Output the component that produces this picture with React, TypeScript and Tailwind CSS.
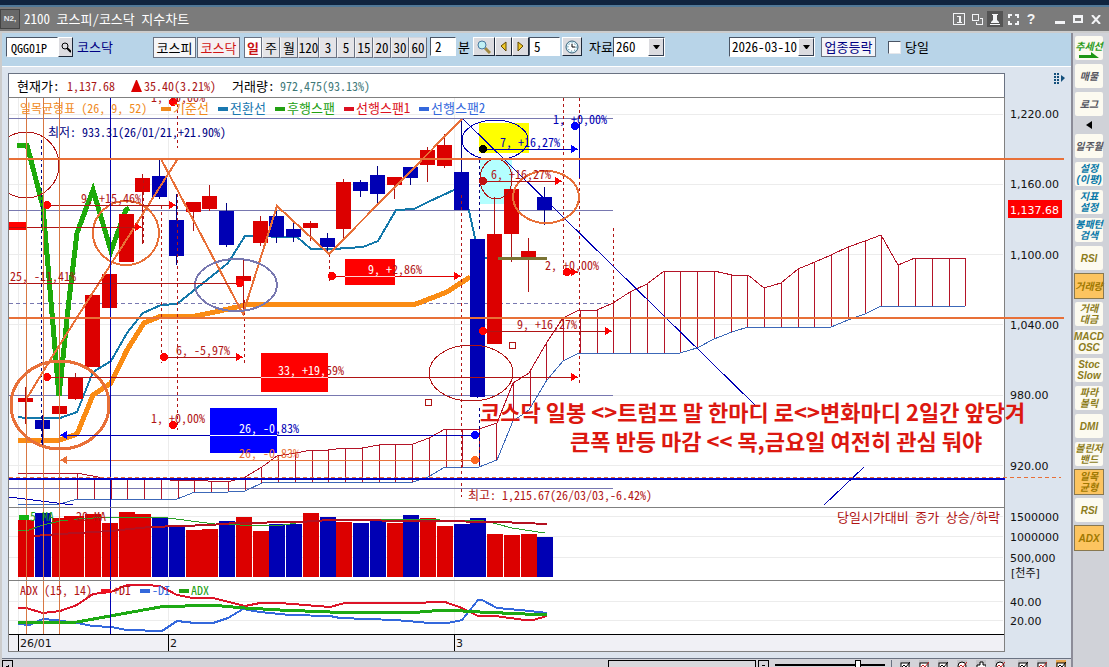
import React, { useState } from "react";

type Point = [number, number];

interface Candle {
  up: boolean;
  top: number;
  bottom: number;
  high: number;
  low: number;
}

interface MeasureProps {
  y: number;
  dot?: number;
  from: number;
  to: number;
  color: string;
  dotColor?: string;
  arrowColor?: string;
  reverse?: boolean;
}

interface SideItem {
  lines: string[];
  tone: string;
  active?: boolean;
}

const RED = "#dc0000";
const BLUE = "#0000b4";
const ORANGE = "#e87038";
const DARK_RED = "#b01414";
const NAVY = "#000082";

const STEP = 16.75;

const candles: Candle[] = [
  { up: true, top: 398, bottom: 402, high: 387, low: 424 },
  { up: false, top: 420, bottom: 429, high: 415, low: 448 },
  { up: true, top: 406, bottom: 414, high: 403, low: 421 },
  { up: true, top: 378, bottom: 399, high: 373, low: 400 },
  { up: true, top: 295, bottom: 367, high: 295, low: 367 },
  { up: true, top: 274, bottom: 308, high: 274, low: 308 },
  { up: true, top: 214, bottom: 262, high: 214, low: 262 },
  { up: true, top: 178, bottom: 192, high: 174, low: 244 },
  { up: false, top: 176, bottom: 197, high: 160, low: 199 },
  { up: false, top: 220, bottom: 256, high: 194, low: 265 },
  { up: true, top: 202, bottom: 212, high: 202, low: 231 },
  { up: true, top: 196, bottom: 209, high: 185, low: 211 },
  { up: false, top: 211, bottom: 245, high: 203, low: 247 },
  { up: true, top: 276, bottom: 281, high: 260, low: 310 },
  { up: true, top: 221, bottom: 243, high: 216, low: 246 },
  { up: false, top: 216, bottom: 237, high: 211, low: 243 },
  { up: false, top: 229, bottom: 237, high: 223, low: 242 },
  { up: true, top: 223, bottom: 228, high: 221, low: 241 },
  { up: false, top: 238, bottom: 247, high: 233, low: 251 },
  { up: true, top: 182, bottom: 229, high: 179, low: 238 },
  { up: false, top: 182, bottom: 191, high: 180, low: 197 },
  { up: false, top: 175, bottom: 194, high: 166, low: 203 },
  { up: true, top: 177, bottom: 185, high: 177, low: 199 },
  { up: false, top: 167, bottom: 178, high: 167, low: 185 },
  { up: true, top: 150, bottom: 165, high: 147, low: 182 },
  { up: true, top: 145, bottom: 166, high: 134, low: 168 },
  { up: false, top: 172, bottom: 210, high: 119, low: 210 },
  { up: false, top: 239, bottom: 397, high: 239, low: 398 },
  { up: true, top: 234, bottom: 344, high: 197, low: 344 },
  { up: true, top: 189, bottom: 234, high: 189, low: 262 },
  { up: true, top: 251, bottom: 259, high: 238, low: 292 },
  { up: false, top: 197, bottom: 210, high: 187, low: 225 },
];

const volumes: [number, boolean][] = [
  [520, true], [513, false], [518, true], [516, true], [514, true], [523, true], [512, true], [514, true],
  [517, false], [527, false], [530, true], [529, true], [521, false], [517, true], [531, true], [524, false],
  [524, false], [513, true], [517, false], [522, true], [523, false], [519, false], [523, true], [515, false],
  [518, true], [526, true], [524, false], [518, false], [534, true], [535, true], [534, true], [537, false],
];

const lagging: Point[] = [[17, 145], [27, 145], [43, 207], [59, 396], [69, 300], [77, 233], [93, 190], [111, 251], [126, 210], [129, 208]];

const conversion: Point[] = [
  [18, 417], [26, 418], [60, 418], [77, 412], [93, 372], [111, 361], [127, 333], [143, 313], [161, 305], [177, 304],
  [228, 263], [245, 236], [297, 237], [311, 249], [333, 249], [363, 247], [378, 241], [396, 210], [414, 209],
  [428, 202], [454, 190], [463, 189], [469, 211], [477, 247], [485, 258], [547, 258],
];

const base: Point[] = [
  [18, 440], [60, 440], [77, 434], [93, 395], [111, 383], [127, 350], [144, 323], [161, 316], [195, 316],
  [215, 312], [250, 304], [416, 304], [447, 292], [470, 277],
];

const spanA: Point[] = [
  [18, 473], [77, 473], [103, 478], [169, 480], [208, 481], [228, 482], [245, 477], [262, 467], [277, 456],
  [295, 453], [312, 450], [328, 450], [345, 448], [362, 448], [379, 445], [395, 444], [413, 444], [429, 438],
  [445, 429], [479, 429], [497, 423], [513, 383], [529, 373], [547, 342], [563, 318], [579, 310], [597, 310],
  [613, 303], [630, 292], [647, 284], [664, 271], [714, 271], [732, 275], [748, 275], [764, 288], [781, 283],
  [798, 269], [815, 262], [831, 255], [848, 247], [865, 241], [881, 235], [898, 265], [915, 258], [965, 258],
];

const spanB: Point[] = [
  [18, 504], [60, 504], [77, 499], [177, 499], [195, 492], [228, 492], [245, 491], [262, 483], [277, 482],
  [413, 482], [428, 477], [445, 467], [479, 467], [497, 460], [513, 421], [529, 410], [547, 380], [563, 361],
  [579, 353], [680, 353], [697, 348], [714, 339], [732, 332], [748, 327], [831, 327], [848, 320], [865, 314],
  [881, 306], [965, 306],
];

const zigzag: Point[] = [[161, 159], [243, 314], [277, 206], [329, 254], [462, 119]];

const volShort: Point[] = [
  [18, 531], [29, 530], [43, 525], [60, 521], [77, 519], [110, 517], [160, 517], [215, 524], [240, 525],
  [283, 525], [303, 522], [330, 520], [370, 519], [430, 519], [450, 521], [480, 520], [497, 524], [512, 528], [545, 533],
];
const volLong: Point[] = [
  [34, 536], [60, 534], [110, 531], [150, 527], [210, 525], [235, 523], [300, 522], [330, 520], [430, 521], [500, 522], [547, 524],
];

const plusDI: Point[] = [
  [18, 608], [26, 608], [43, 613], [60, 611], [77, 605], [93, 594], [111, 592], [127, 585], [145, 585], [160, 586],
  [177, 595], [193, 598], [213, 598], [245, 606], [260, 603], [280, 603], [330, 607], [345, 603], [420, 603],
  [432, 602], [445, 602], [462, 608], [478, 616], [495, 616], [525, 620], [533, 620], [547, 616],
];
const minusDI: Point[] = [
  [18, 624], [30, 625], [43, 619], [55, 620], [77, 623], [93, 626], [111, 627], [127, 630], [162, 631], [177, 621],
  [195, 623], [213, 623], [228, 618], [243, 609], [260, 612], [290, 615], [330, 616], [340, 618], [395, 620],
  [430, 623], [448, 623], [462, 620], [478, 600], [482, 600], [497, 608], [530, 611], [547, 613],
];
const adx: Point[] = [
  [18, 623], [77, 622], [110, 616], [160, 607], [210, 605], [245, 608], [280, 610], [330, 612], [420, 612],
  [445, 610], [480, 612], [547, 615],
];

const legend = [
  { x: 161, label: "기준선", color: "#f08a1c" },
  { x: 218, label: "전환선", color: "#1a78b0" },
  { x: 275, label: "후행스팬", color: "#22a012" },
  { x: 344, label: "선행스팬1", color: "#dc1020" },
  { x: 419, label: "선행스팬2", color: "#3468dc" },
];

const priceLabels: [string, number][] = [
  ["1,220.00", 118], ["1,160.00", 188], ["1,100.00", 259], ["1,040.00", 329], ["980.00", 399], ["920.00", 470],
  ["1500000", 521], ["1000000", 541], ["500,000", 562], ["40.00", 606], ["20.00", 625],
];

// dashed verticals: x, from, to, colour
const dashes: [number, number, number, string][] = [
  [41, 140, 445, NAVY],
  [177, 98, 148, DARK_RED],
  [177, 194, 430, DARK_RED],
  [161, 206, 363, DARK_RED],
  [143, 180, 244, DARK_RED],
  [244, 300, 363, DARK_RED],
  [329, 254, 282, DARK_RED],
  [461, 195, 497, DARK_RED],
  [479, 160, 229, NAVY],
  [479, 408, 466, NAVY],
  [563, 98, 278, DARK_RED],
  [579, 98, 383, DARK_RED],
  [613, 228, 330, DARK_RED],
];

const sideTop: SideItem[] = [
  { lines: ["매물"], tone: "text-[#55555f]" },
  { lines: ["로그"], tone: "text-[#55555f]" },
];

const sideRest: SideItem[] = [
  { lines: ["일주월"], tone: "text-[#55555f]" },
  { lines: ["설정", "(이평)"], tone: "text-[#0878a8]" },
  { lines: ["지표", "설정"], tone: "text-[#0878a8]" },
  { lines: ["봉패턴", "검색"], tone: "text-[#0878a8]" },
  { lines: ["RSI"], tone: "text-[#8c7c1c]" },
  { lines: ["거래량"], tone: "text-[#a07800]", active: true },
  { lines: ["거래", "대금"], tone: "text-[#8c7c1c]" },
  { lines: ["MACD", "OSC"], tone: "text-[#8c7c1c]" },
  { lines: ["Stoc", "Slow"], tone: "text-[#8c7c1c]" },
  { lines: ["파라", "볼릭"], tone: "text-[#8c7c1c]" },
  { lines: ["DMI"], tone: "text-[#8c7c1c]" },
  { lines: ["볼린저", "밴드"], tone: "text-[#8c7c1c]" },
  { lines: ["일목", "균형"], tone: "text-[#a07800]", active: true },
  { lines: ["RSI"], tone: "text-[#8c7c1c]" },
  { lines: ["ADX"], tone: "text-[#a07800]", active: true },
];

const periods = ["일", "주", "월", "120", "3", "5", "15", "20", "30", "60"];

const toPoints = (list: Point[]) => list.map((p) => p.join(",")).join(" ");

const valueAt = (list: Point[], x: number) => {
  for (let i = 1; i < list.length; i++) {
    const [x0, y0] = list[i - 1];
    const [x1, y1] = list[i];
    if (x <= x1) return y0 + ((y1 - y0) * (x - x0)) / (x1 - x0);
  }
  return list[list.length - 1][1];
};

const cloudBars = Array.from({ length: 54 }, (_, i) => Math.round(77 + i * 16.76)).filter((x) => x <= 966);

const Measure: React.FC<MeasureProps> = ({ y, dot, from, to, color, dotColor, arrowColor, reverse }) => (
  <g>
    <line x1={from} x2={to} y1={y} y2={y} stroke={color} />
    {dot !== undefined && <circle cx={dot} cy={y} r="4" fill={dotColor ?? "#f00"} />}
    {reverse ? (
      <polygon points={`${from},${y} ${from + 7},${y - 4} ${from + 7},${y + 4}`} fill={arrowColor ?? color} />
    ) : (
      <polygon points={`${to},${y} ${to - 7},${y - 4} ${to - 7},${y + 4}`} fill={arrowColor ?? "#f00"} />
    )}
  </g>
);

const Chart: React.FC = () => (
  <svg
    viewBox="8 97 1057 555"
    className="block w-full font-['Noto_Sans_Mono_CJK_KR','Noto_Sans_CJK_KR',sans-serif] text-[12px]"
    shapeRendering="crispEdges"
    role="img"
    aria-label="코스닥 지수차트"
  >
    <defs>
      <clipPath id="plot">
        <rect x="9" y="98" width="996" height="537" />
      </clipPath>
    </defs>
    <rect x="8" y="97" width="997" height="555" fill="#808080" />
    <rect x="9" y="98" width="995" height="536" fill="#fff" />
    <rect x="9" y="635" width="995" height="16" fill="#f0f0f5" />

    {/* grid */}
    <g fill="#ececec">
      {[114, 184, 254, 324, 395, 465, 516, 536, 557, 601, 620].map((y) => (
        <rect key={y} x="9" y={y} width="994" height="1" />
      ))}
      {[18, 168, 454].map((x) => (
        <rect key={x} x={x} y="98" width="1" height="536" />
      ))}
    </g>
    <g fill="#7878b0">
      {[118, 210, 395, 488].map((y) => (
        <rect key={y} x="9" y={y} width="604" height="1" />
      ))}
    </g>
    <line x1="9" x2="613" y1="303" y2="303" stroke="#7878b0" strokeDasharray="4 3" />

    <g clipPath="url(#plot)" fill="none">
      {/* cloud */}
      {cloudBars.map((x) => (
        <line key={x} x1={x} x2={x} y1={valueAt(spanA, x)} y2={valueAt(spanB, x)} stroke="#b41428" />
      ))}
      <polyline points={toPoints(spanA)} stroke="#b41428" />
      <polyline points={toPoints(spanB)} stroke="#3c68b8" />

      {/* highlight boxes */}
      <rect x="479" y="123" width="50" height="30" fill="#ff0" />
      <rect x="480" y="160" width="32" height="44" fill="#b4ffff" />
      <rect x="345" y="259" width="50" height="26" fill="#f00" />
      <rect x="261" y="353" width="67" height="39" fill="#f00" />
      <rect x="210" y="408" width="67" height="45" fill="#00f" />
      <rect x="9" y="222" width="17" height="8" fill="#f00" />

      <polyline points={toPoints(lagging)} stroke="#1eaa0a" strokeWidth="5" />
      <polyline points={toPoints(base)} stroke="#fa8c14" strokeWidth="5" />
      <polyline points={toPoints(conversion)} stroke="#1478aa" strokeWidth="2" />

      {/* candles */}
      {candles.map((c, i) => {
        const x = Math.round(18 + i * STEP);
        return (
          <g key={i} fill={c.up ? RED : BLUE}>
            <rect x={x + 7} y={c.high} width="1" height={c.low - c.high} fill={c.up ? DARK_RED : NAVY} />
            <rect x={x} y={c.top} width="15" height={c.bottom - c.top} />
          </g>
        );
      })}
      <line x1="498" x2="547" y1="258" y2="258" stroke="#7a7434" strokeWidth="3" />

      {dashes.map(([x, y1, y2, color]) => (
        <line key={`${x}-${y1}`} x1={x} x2={x} y1={y1} y2={y2} stroke={color} strokeDasharray="3 3" />
      ))}
      <line x1="579" x2="579" y1="124" y2="178" stroke={BLUE} />

      {/* drawn trend lines */}
      <polyline points="27,398 52,357 177,160" stroke={ORANGE} strokeWidth="2" />
      <polyline points={toPoints(zigzag)} stroke={ORANGE} strokeWidth="2" />
      <polyline points="463,119 757,407" stroke={BLUE} />
      <polyline points="864,467 824,505" stroke={BLUE} />
      <polyline points="9,497 73,505" stroke={BLUE} />

      {/* circles */}
      <ellipse cx="26" cy="165" rx="33" ry="33" stroke={DARK_RED} />
      <ellipse cx="126" cy="233" rx="33" ry="32" stroke={ORANGE} strokeWidth="2" />
      <ellipse cx="60" cy="405" rx="49" ry="44" stroke={ORANGE} strokeWidth="3" />
      <ellipse cx="236" cy="285" rx="41" ry="26" stroke="#7878b0" strokeWidth="2" />
      <ellipse cx="495" cy="140" rx="33" ry="20" stroke={BLUE} />
      <ellipse cx="496" cy="179" rx="16" ry="20" stroke={DARK_RED} />
      <ellipse cx="546" cy="197" rx="33" ry="26" stroke={ORANGE} strokeWidth="2" />
      <ellipse cx="471" cy="373" rx="42" ry="28" stroke={DARK_RED} />
      <rect x="509" y="342" width="6" height="6" stroke={DARK_RED} />
      <rect x="425" y="399" width="6" height="6" stroke={DARK_RED} />

      {/* period measures */}
      <Measure y={205} dot={47} from={47} to={176} color={DARK_RED} />
      <Measure y={227} from={9} to={142} color={DARK_RED} />
      <Measure y={283} dot={240} from={9} to={244} color={DARK_RED} />
      <Measure y={357} dot={164} from={164} to={243} color={DARK_RED} />
      <Measure y={377} dot={47} from={47} to={578} color={DARK_RED} />
      <line x1="261" x2="328" y1="377" y2="377" stroke="#ffd0d0" />
      <Measure y={435} dot={475} dotColor="#00f" from={60} to={475} color={BLUE} arrowColor="#00f" reverse />
      <line x1="210" x2="277" y1="435" y2="435" stroke="#fff" />
      <Measure y={460} dot={475} dotColor="#ff6820" from={60} to={475} color={ORANGE} reverse />
      <Measure y={276} dot={332} from={332} to={461} color="#e00000" />
      <line x1="345" x2="395" y1="276" y2="276" stroke="#ffd0d0" />
      <Measure y={149} dot={483} dotColor="#000" from={483} to={578} color={BLUE} arrowColor="#00f" />
      <Measure y={181} dot={483} dotColor="#c01010" from={483} to={562} color={DARK_RED} />
      <Measure y={331} dot={483} from={483} to={612} color={DARK_RED} />
      <Measure y={272} dot={567} from={567} to={578} color={DARK_RED} />
      <circle cx="173" cy="102" r="4" fill="#f00" />
      <circle cx="173" cy="425" r="4" fill="#f00" />
      <circle cx="575" cy="126" r="4" fill="#00f" />

      {/* volume */}
      {volumes.map(([top, up], i) => (
        <rect key={i} x={Math.round(18 + i * STEP)} y={top} width="16" height={577 - top} fill={up ? RED : BLUE} />
      ))}
      <polyline points={toPoints(volShort)} stroke="#2ca028" />
      <polyline points={toPoints(volLong)} stroke="#b41020" strokeWidth="2" />

      {/* ADX */}
      <polyline points={toPoints(plusDI)} stroke="#dc1428" strokeWidth="2" />
      <polyline points={toPoints(minusDI)} stroke="#3468dc" strokeWidth="2" />
      <polyline points={toPoints(adx)} stroke="#1eaa14" strokeWidth="3" />

      {[27, 44, 60].map((x) => (
        <rect key={x} x={x - 1} y="98" width="1" height="536" fill="#d87844" />
      ))}
      <rect x="110" y="98" width="1" height="536" fill={BLUE} />
    </g>

    {/* levels and panel borders */}
    <rect x="9" y="158" width="1055" height="2" fill={ORANGE} />
    <rect x="9" y="317" width="1055" height="2" fill={ORANGE} />
    <line x1="9" x2="1061" y1="477" y2="477" stroke={ORANGE} strokeDasharray="4 3" />
    <rect x="9" y="478" width="996" height="2" fill="#0000c8" />
    <rect x="9" y="507" width="995" height="1" fill="#808080" />
    <rect x="9" y="580" width="995" height="1" fill="#808080" />
    <rect x="9" y="634" width="995" height="1" fill="#000" />
    {[18, 168, 454].map((x) => (
      <rect key={x} x={x} y="635" width="1" height="16" fill="#000" />
    ))}

    {/* legends */}
    <text x="20" y="113" fill="#f08a1c">일목균형표 (26, 9, 52)</text>
    {legend.map((l) => (
      <g key={l.label} fill={l.color}>
        <rect x={l.x} y="107" width="10" height="4" />
        <text x={l.x + 12} y="113" className="text-[13px]">{l.label}</text>
      </g>
    ))}
    <rect x="19" y="515" width="10" height="5" fill="#14b414" />
    <text x="30" y="521" fill="#14a014">5 MA</text>
    <rect x="64" y="516" width="10" height="4" fill="#dc0000" />
    <text x="76" y="521" fill={DARK_RED}>20 MA</text>
    <text x="20" y="595" fill={DARK_RED}>ADX (15, 14)</text>
    <rect x="101" y="589" width="10" height="4" fill="#f01020" />
    <text x="113" y="595" fill={DARK_RED}>+DI</text>
    <rect x="140" y="589" width="10" height="4" fill="#3468dc" />
    <text x="152" y="595" fill="#3468dc">-DI</text>
    <rect x="179" y="589" width="10" height="4" fill="#22a012" />
    <text x="191" y="595" fill="#22a012">ADX</text>
    <text x="48" y="137" fill={NAVY}>최저: 933.31(26/01/21,+21.90%)</text>
    <text x="468" y="500" fill={DARK_RED}>최고: 1,215.67(26/03/03,-6.42%)</text>
    <text x="837" y="522" fill={DARK_RED} className="text-[13px]">당일시가대비 종가 상승/하락</text>

    {/* measure labels */}
    <g fill={DARK_RED} clipPath="url(#plot)">
      <text x="151" y="102">1, +0,00%</text>
      <text x="81" y="203">9, +15,46%</text>
      <text x="10" y="281">25, -11,41%</text>
      <text x="176" y="355">6, -5,97%</text>
      <text x="278" y="375"><tspan fill="#fff">33, +19,</tspan>59%</text>
      <text x="151" y="423">1, +0,00%</text>
      <text x="368" y="274"><tspan fill="#fff">9, +</tspan>2,86%</text>
      <text x="491" y="179">6, +16,27%</text>
      <text x="517" y="329">9, +16,27%</text>
      <text x="545" y="270">2, +0,00%</text>
      <text x="239" y="433" fill={BLUE}><tspan fill="#fff">26, -0</tspan>,83%</text>
      <text x="239" y="458" fill={ORANGE}>26, -0,83%</text>
      <text x="500" y="147" fill={BLUE}>7, +16,27%</text>
      <text x="553" y="124" fill={BLUE}>1, +0,00%</text>
    </g>

    {/* value axis */}
    <rect x="1008" y="200" width="54" height="18" fill="#f00" />
    <g className="font-['DejaVu_Sans','Noto_Sans_CJK_KR',sans-serif] text-[11px]" fill="#111">
      {priceLabels.map(([label, y]) => (
        <text key={label} x="1010" y={y}>{label}</text>
      ))}
      <text x="1010" y="214" fill="#fff">1,137.68</text>
      <text x="1011" y="577">[천주]</text>
      <text x="20" y="647">26/01</text>
      <text x="170" y="647">2</text>
      <text x="456" y="647">3</text>
    </g>

    <g className="font-['Noto_Sans_CJK_KR',sans-serif] text-[22px] font-bold" fill="#dc1810">
      <text x="480" y="421">코스닥 일봉 &lt;&gt;트럼프 말 한마디 로&lt;&gt;변화마디 2일간 앞당겨</text>
      <text x="570" y="450">큰폭 반등 마감 &lt;&lt; 목,금요일 여전히 관심 둬야</text>
    </g>
  </svg>
);

const TitleBar: React.FC = () => (
  <header className="flex h-6 shrink-0 items-center bg-[#7b7b7b] text-white">
    <span className="flex h-5 w-5 items-center justify-center border border-[#444] bg-[#686868] font-['Liberation_Sans',sans-serif] text-[8px] font-bold text-gray-200">
      N2,
    </span>
    <h1 className="ml-1 flex-1 text-[13px] whitespace-pre">2100 코스피/코스닥 지수차트</h1>
    <div className="flex items-center gap-0.5 pr-[5px] text-gray-100">
      <button type="button" aria-label="1번 창" className="flex h-4 w-4 items-center justify-center">
        <svg width="12" height="12" viewBox="0 0 12 12" fill="none" stroke="currentColor" shapeRendering="crispEdges">
          <rect x="0.5" y="0.5" width="11" height="11" />
          <path d="M4 3.5h2M4 9.5h5" />
          <path d="M6.5 3v6" strokeWidth="2" />
        </svg>
      </button>
      <button type="button" aria-label="창 복제" className="flex h-4 w-4 items-center justify-center">
        <svg width="11" height="11" viewBox="0 0 11 11" fill="none" stroke="currentColor" shapeRendering="crispEdges">
          <rect x="0.5" y="0.5" width="6" height="6" />
          <path d="M8 4.500h2.500v5.500h-6v-2" />
        </svg>
      </button>
      <button type="button" aria-label="고정" className="flex h-4 w-4 items-center justify-center bg-[#545454]">
        <svg width="10" height="11" viewBox="0 0 10 11" fill="currentColor">
          <path d="M2 0h6v1H7v5l2 2v1H1V8l2-2V1H2zM0 10h10v1H0z" />
        </svg>
      </button>
      <button type="button" aria-label="전체 화면" className="flex h-4 w-4 items-center justify-center">
        <svg width="11" height="11" viewBox="0 0 11 11" fill="none" stroke="currentColor" strokeWidth="2" shapeRendering="crispEdges">
          <path d="M1 4V1h3M7 1h3v3M10 7v3H7M4 10H1V7" />
        </svg>
      </button>
      <button type="button" aria-label="도움말" className="h-4 w-4 font-['Liberation_Sans',sans-serif] text-[14px] leading-4 font-bold">
        ?
      </button>
      <button type="button" aria-label="최소화" className="ml-[11px] flex h-4 w-4 items-center justify-center">
        <svg width="10" height="10" viewBox="0 0 10 10" fill="currentColor"><rect y="7" width="10" height="3" /></svg>
      </button>
      <button type="button" aria-label="최대화" className="flex h-4 w-4 items-center justify-center">
        <svg width="10" height="8" viewBox="0 0 10 8" fill="currentColor"><path fillRule="evenodd" d="M0 0h10v8H0zM2 3v3h6V3z" /></svg>
      </button>
      <button type="button" aria-label="닫기" className="flex h-4 w-4 items-center justify-center">
        <svg width="10" height="9" viewBox="0 0 10 9" stroke="currentColor" strokeWidth="2"><path d="M1 0l8 9M9 0L1 9" /></svg>
      </button>
    </div>
  </header>
);

const inputClass = "border border-t-gray-600 border-l-gray-600 border-r-white border-b-white bg-white px-1 outline-none";
const raisedClass = "flex items-center justify-center border border-t-white border-l-white border-r-gray-800 border-b-gray-800 bg-[#dcdce0]";

interface ComboProps {
  label: string;
  value: string;
  width: string;
}

const Combo: React.FC<ComboProps> = ({ label, value, width }) => (
  <div className={`relative h-5 ${width}`}>
    <select aria-label={label} defaultValue={value} className={`${inputClass} h-5 w-full appearance-none pl-0.5 text-[13px]`}>
      <option>{value}</option>
    </select>
    <span className="pointer-events-none absolute top-px right-px flex h-[18px] w-4 items-center justify-center border border-t-white border-l-white border-r-gray-700 border-b-gray-700 bg-[#dcdce0]">
      <svg width="7" height="4" viewBox="0 0 7 4"><path d="M0 0h7L4 4H3z" /></svg>
    </span>
  </div>
);

const Toolbar: React.FC = () => {
  const [period, setPeriod] = useState("일");
  const [code, setCode] = useState("QGG01P");
  const [minutes, setMinutes] = useState("2");
  const [count, setCount] = useState("5");
  const [today, setToday] = useState(false);

  return (
    <div className="flex h-[34px] items-start border-b border-white bg-[#b8d4e8] pt-1 pl-1 text-[13px] whitespace-nowrap">
      <input aria-label="종목코드" value={code} onChange={(e) => setCode(e.target.value)} className={`${inputClass} h-5 w-[52px] text-[12px]`} />
      <button type="button" aria-label="종목 검색" className={`${raisedClass} h-5 w-[15px]`}>
        <svg width="10" height="11" viewBox="0 0 10 11" fill="none" stroke="#000">
          <circle cx="4" cy="4" r="3" />
          <path d="M6 6l4 4" strokeWidth="2" />
        </svg>
      </button>
      <span className="ml-1 h-5 w-[76px] leading-5 text-[#000082]">코스닥</span>
      <button type="button" className="h-[21px] w-[43px] border border-gray-500 bg-[#f6f6f8]">코스피</button>
      <button type="button" className="ml-px h-[21px] w-[43px] border border-gray-500 bg-[#f6f0f2] text-[#d01414]">코스닥</button>
      <div className="ml-1 flex">
        {periods.map((p) => (
          <button
            key={p}
            type="button"
            onClick={() => setPeriod(p)}
            className={`flex h-[21px] items-center justify-center border border-gray-500 ${p === "120" ? "w-[21px]" : "w-[18px]"} ${
              period === p ? "bg-white font-bold text-[#c81414]" : "border-t-gray-300 border-l-gray-100 bg-[#e4e4e8]"
            }`}
          >
            {p}
          </button>
        ))}
      </div>
      <input id="minutes" value={minutes} onChange={(e) => setMinutes(e.target.value)} className={`${inputClass} ml-[3px] h-[19px] w-[26px]`} />
      <label htmlFor="minutes" className="ml-0.5 w-[15px] leading-5">분</label>
      <button type="button" aria-label="확대" className={`${raisedClass} h-[19px] w-[22px]`}>
        <svg width="14" height="14" viewBox="0 0 14 14" fill="none">
          <path d="M8 8l5 5" stroke="#a08840" strokeWidth="3" />
          <circle cx="5" cy="5" r="4" fill="#c0f0f4" stroke="#4878a0" />
        </svg>
      </button>
      <button type="button" aria-label="이전" className={`${raisedClass} h-[19px] w-[17px]`}>
        <svg width="7" height="11" viewBox="0 0 7 11"><path d="M6 1v9L1 5z" fill="#f0c828" stroke="#604800" /></svg>
      </button>
      <button type="button" aria-label="다음" className={`${raisedClass} h-[19px] w-[17px]`}>
        <svg width="7" height="11" viewBox="0 0 7 11"><path d="M1 1v9l5-5z" fill="#f0c828" stroke="#604800" /></svg>
      </button>
      <input aria-label="간격" value={count} onChange={(e) => setCount(e.target.value)} className={`${inputClass} h-[19px] w-[31px]`} />
      <button type="button" aria-label="시간" className={`${raisedClass} ml-0.5 h-[19px] w-5`}>
        <svg width="14" height="14" viewBox="0 0 14 14" fill="none" stroke="#386078">
          <circle cx="7" cy="7" r="6" fill="#d4f0f8" />
          <circle cx="7" cy="7" r="4" fill="#fff" strokeDasharray="1 2" />
          <path d="M7 4v3h3" stroke="#000" />
        </svg>
      </button>
      <span className="ml-[7px] w-6 leading-5">자료</span>
      <Combo label="자료" value="260" width="w-[52px]" />
      <div className="w-16" />
      <Combo label="날짜" value="2026-03-10" width="w-[86px]" />
      <button type="button" className="ml-1.5 h-5 w-[55px] border border-gray-500 bg-[#f4f4f8] text-[#000082]">업종등락</button>
      <label className="ml-3 flex h-5 items-center gap-1">
        <input
          type="checkbox"
          checked={today}
          onChange={(e) => setToday(e.target.checked)}
          className="h-[13px] w-[13px] appearance-none border border-gray-200 border-t-gray-600 border-l-gray-600 bg-white checked:bg-gray-500"
        />
        당일
      </label>
    </div>
  );
};

const SideButton: React.FC<{ item: SideItem }> = ({ item }) => (
  <button
    type="button"
    className={`flex h-6 w-7 shrink-0 flex-col items-center justify-center font-['Liberation_Sans','Noto_Sans_CJK_KR',sans-serif] text-[10px] leading-[11px] font-bold whitespace-nowrap italic ${item.tone} ${
      item.active ? "bg-[#fcc460] outline outline-[#887850]" : "rounded-xs bg-[#fcfaf0]"
    }`}
  >
    {item.lines.map((line) => (
      <span key={line}>{line}</span>
    ))}
  </button>
);

const SideBar: React.FC = () => (
  <aside className="flex w-[38px] shrink-0 flex-col items-start gap-1 border-l-2 border-[#8c8c98] bg-[#d0d2d8] pt-[3px] pl-0.5">
    <button
      type="button"
      className="flex h-6 w-7 shrink-0 flex-col items-center justify-center rounded-xs bg-[#fcfaf0] font-['Noto_Sans_CJK_KR',sans-serif] text-[10px] leading-[13px] font-bold whitespace-nowrap text-[#2c9c1c] italic"
    >
      추세선
      <svg width="20" height="6" viewBox="0 0 20 6" fill="#1e9614"><path d="M0 3h12V0l8 6H0z" /></svg>
    </button>
    {sideTop.map((item) => (
      <SideButton key={item.lines[0]} item={item} />
    ))}
    <button type="button" aria-label="접기" className="flex h-2.5 w-7 shrink-0 items-center justify-center">
      <svg width="6" height="8" viewBox="0 0 6 8"><path d="M6 0v8L0 4z" /></svg>
    </button>
    {sideRest.map((item, i) => (
      <SideButton key={i} item={item} />
    ))}
  </aside>
);

const BottomBar: React.FC = () => (
  <footer className="mt-1.5 flex h-5 items-start border-t border-gray-500 bg-[#d4d4d9] pt-px">
    <button type="button" aria-label="왼쪽" className="flex h-4 w-[11px] justify-center border border-black pt-1">
      <svg width="5" height="7" viewBox="0 0 5 7" fill="none" stroke="#000" shapeRendering="crispEdges"><path d="M1 2l2-1v6" /></svg>
    </button>
    <div className="flex flex-1 justify-end">
      <div className="h-4 w-[148px] border border-black bg-[#d8d8dc]" />
    </div>
    <button type="button" aria-label="축소" className="ml-0.5 flex h-4 w-[11px] justify-center border border-black pt-1">
      <svg width="3" height="2" viewBox="0 0 3 2"><path d="M0 0h3v1H0z" /></svg>
    </button>
    <input
      type="range"
      aria-label="확대 비율"
      defaultValue={77}
      className="mx-1.5 h-2.5 w-[110px] appearance-none bg-[linear-gradient(#000,#000)] bg-[length:100%_2px] bg-center bg-no-repeat [&::-webkit-slider-thumb]:h-2.5 [&::-webkit-slider-thumb]:w-1.5 [&::-webkit-slider-thumb]:appearance-none [&::-webkit-slider-thumb]:border [&::-webkit-slider-thumb]:border-black [&::-webkit-slider-thumb]:bg-white"
    />
    <div className="flex w-[180px] items-start gap-[9px] border-l border-gray-500 pl-2">
      {["선", "표", "차트", "새로고침", "추가", "돋보기", "저장", "복사", "설정"].map((name, i) => (
        <button
          key={name}
          type="button"
          aria-label={name}
          className={`h-3 w-2.5 shrink-0 ${i === 6 ? "ml-1" : ""} ${i === 8 ? "bg-[#e8a850]" : "bg-[#c4c4c8]"}`}
        >
          <svg width="10" height="10" viewBox="0 0 10 10" fill="none" stroke="#000">
            {i === 4 ? (
              <path d="M4 1h3v3h3v3H7v3H4V7H1V4h3z" fill="#fff" />
            ) : i === 3 || i === 5 ? (
              <circle cx="5" cy="5" r="4" fill="#fff" />
            ) : (
              <rect x="1" y="2" width="8" height="8" fill="#fff" />
            )}
            {i !== 4 && <path d="M2 6l2-2 2 2 4-5" stroke={i % 2 ? "#c02020" : "#000"} />}
          </svg>
        </button>
      ))}
    </div>
  </footer>
);

const App: React.FC = () => {
  return (
    <div className="flex h-screen flex-col overflow-hidden bg-[#d0d2d8] font-['Noto_Sans_Mono_CJK_KR','Noto_Sans_CJK_KR',sans-serif] text-[12px] leading-4 text-black">
      <div className="h-[7px] shrink-0 border-b-2 border-[#507898] bg-[#10243f]" />
      <TitleBar />
      <div className="flex flex-1 border-t-2 border-[#ccc]">
        <main className="min-w-0 flex-1 border-l-2 border-[#ccc] bg-[#dce4ee]">
          <Toolbar />
          <div className="pt-1.5 pr-1.5 pl-1.5">
            <div className="flex items-start">
              <div className="flex h-6 flex-1 items-center border border-b-0 border-gray-500 bg-white pl-2">
                <span className="w-[50px] text-[13px]">현재가:</span>
                <span className="w-16 text-[#a81414]">1,137.68</span>
                <svg width="11" height="12" viewBox="0 0 11 12" fill="#dc0000"><path d="M5 0h1l5 12H0z" /></svg>
                <span className="ml-0.5 w-[88px] text-[#a81414]">35.40(3.21%)</span>
                <span className="w-12 text-[13px]">거래량:</span>
                <span className="text-[#407878]">972,475(93.13%)</span>
              </div>
              <button type="button" aria-label="메뉴 펼치기" className="flex w-[60px] justify-end">
                <svg width="11" height="11" viewBox="0 0 11 11" fill="#14507c">
                  {[0, 3, 6, 9].map((y) => (
                    <path key={y} d={`M0 ${y}h2v2H0zM3 ${y}h2v2H3z`} />
                  ))}
                  <path d="M7 2l4 3-4 4z" />
                </svg>
              </button>
            </div>
            <Chart />
          </div>
          <BottomBar />
        </main>
        <SideBar />
      </div>
    </div>
  );
};

export default App;
